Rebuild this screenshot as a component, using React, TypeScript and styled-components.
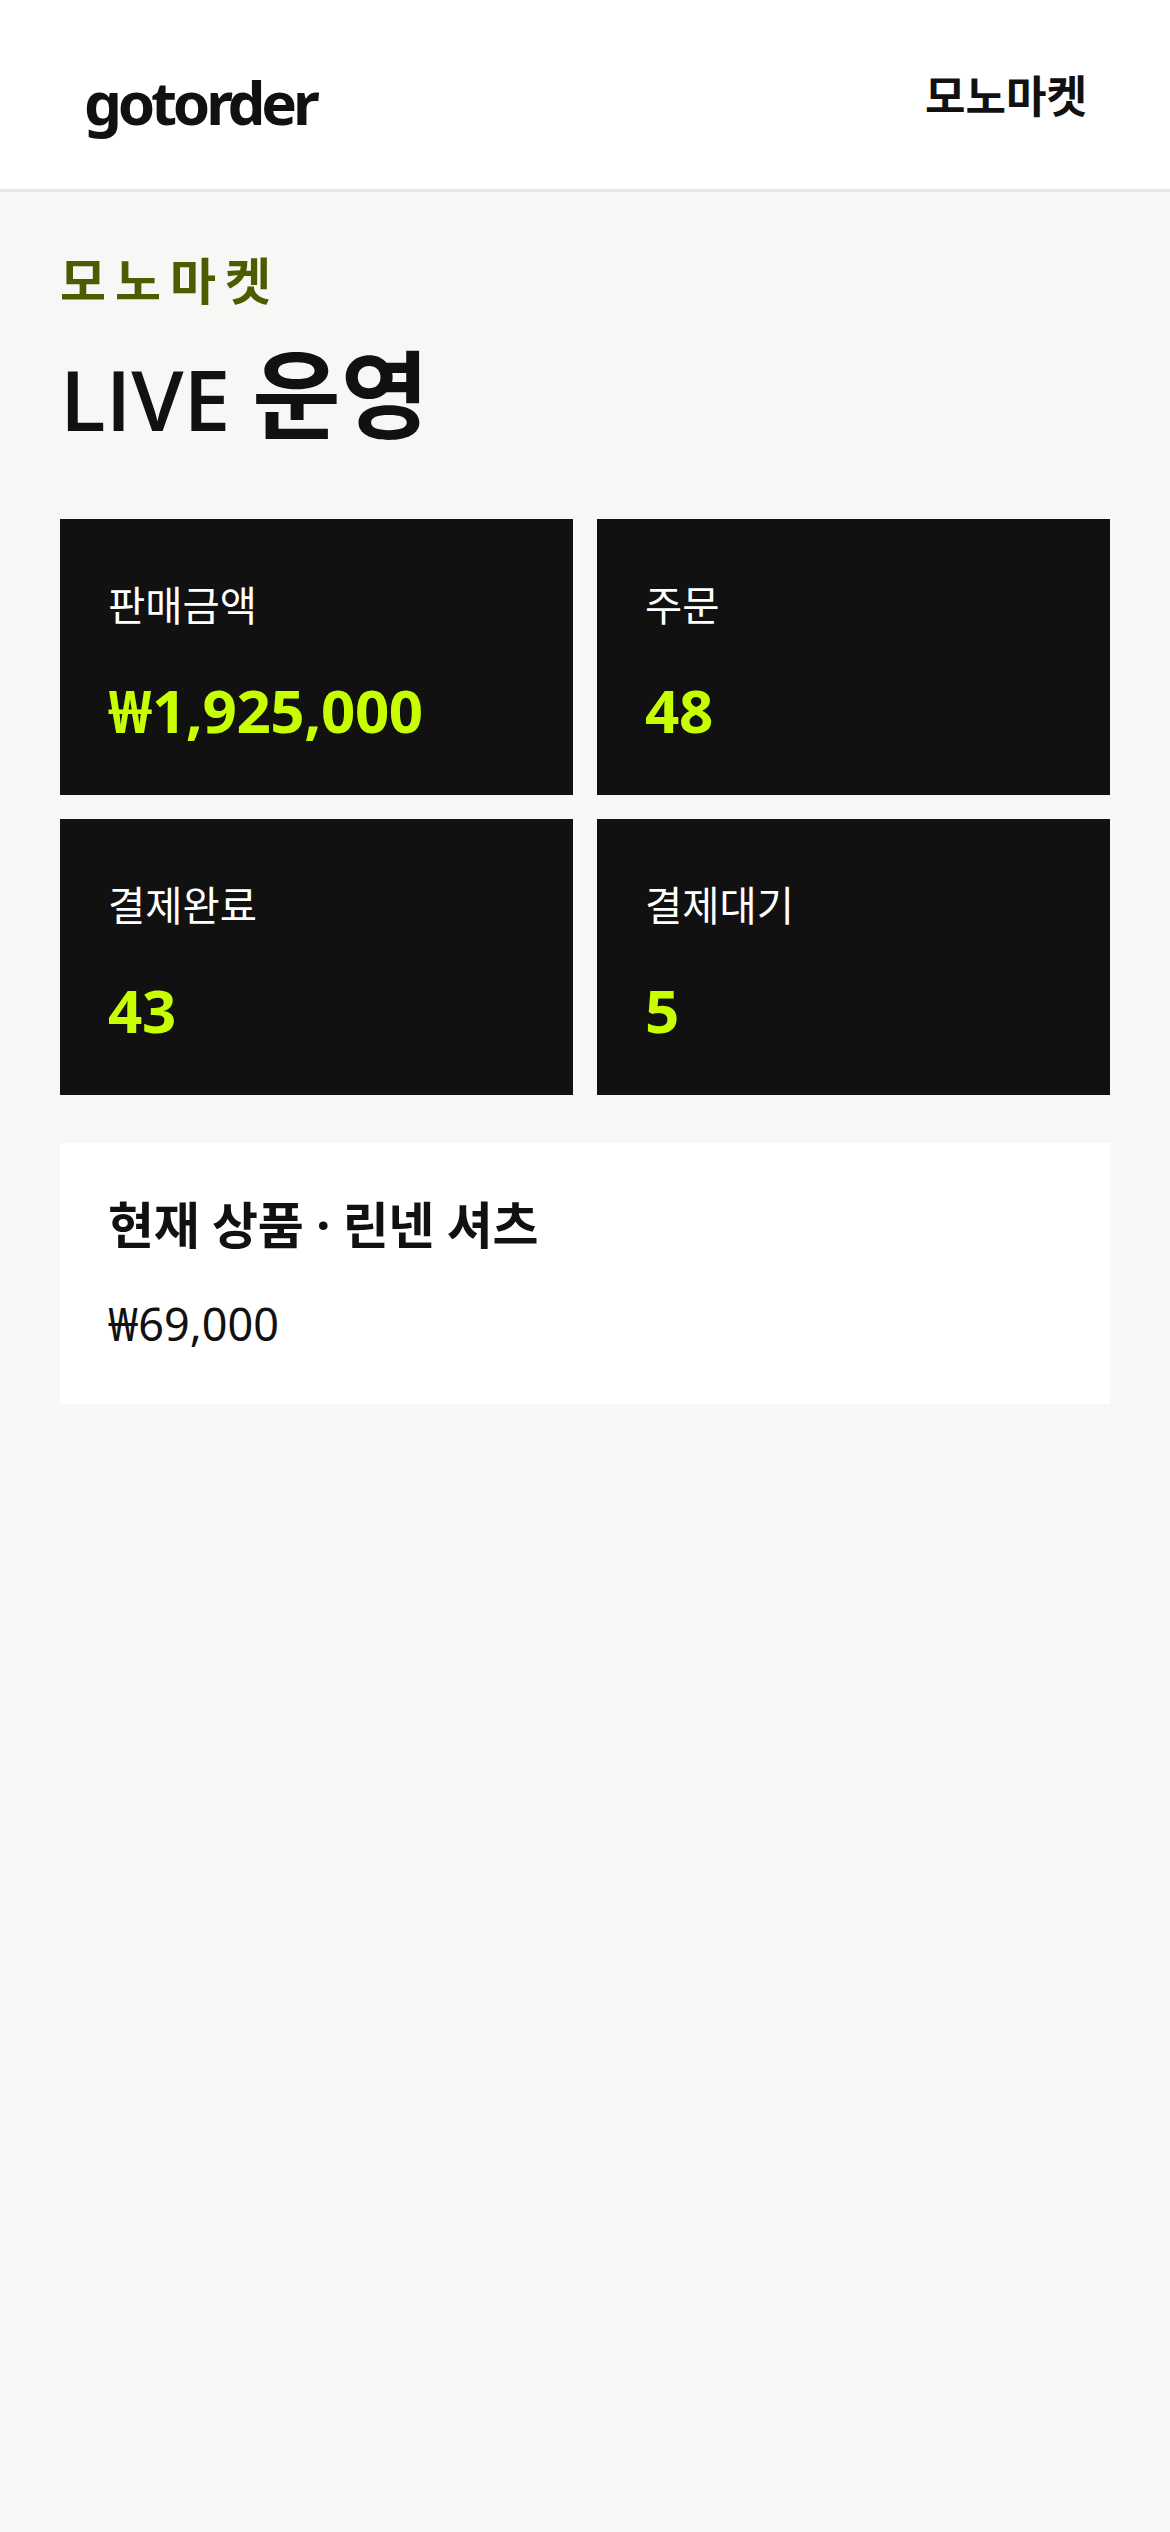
import styled, { createGlobalStyle } from "styled-components";

const GlobalStyle = createGlobalStyle`
  html, body {
    margin: 0;
    padding: 0;
    background: #f7f7f5;
  }
  * {
    box-sizing: border-box;
  }
  body {
    font-family: "Noto Sans CJK KR", sans-serif;
    color: #111;
  }
`;

const Page = styled.div`
  min-height: 2532px;
  background: #f7f7f5;
`;

const Header = styled.header`
  height: 192px;
  padding: 66px 83px 0 84px;
  display: flex;
  justify-content: space-between;
  align-items: flex-start;
  background: #fff;
  border-bottom: 3px solid #e5e5e2;
`;

const Brand = styled.div`
  font-family: "Noto Sans", sans-serif;
  font-size: 60px;
  line-height: 72px;
  font-weight: 700;
  letter-spacing: -4.2px;
`;

const ShopName = styled.div`
  font-size: 44px;
  line-height: 56px;
  font-weight: 700;
`;

const Main = styled.main`
  padding: 54px 60px 0;
`;

const Eyebrow = styled.div`
  font-size: 50px;
  line-height: 64px;
  font-weight: 700;
  letter-spacing: 9px;
  color: #4d5c00;
`;

const Title = styled.h1`
  margin: 24px 0 0;
  height: 112px;
  font-size: 96px;
  line-height: 112px;
  font-weight: 600;
`;

const TitleLatin = styled.span`
  font-family: "Open Sans", sans-serif;
  font-size: 84px;
`;

const StatsGrid = styled.section`
  margin-top: 73px;
  display: grid;
  grid-template-columns: 1fr 1fr;
  gap: 24px;
`;

const StatCard = styled.div`
  height: 276px;
  padding: 59px 48px 0;
  background: #111;
`;

const StatLabel = styled.div`
  font-size: 40.5px;
  line-height: 52px;
  color: #fff;
`;

const StatValue = styled.div`
  margin-top: 40px;
  font-family: "Noto Sans", "Noto Sans CJK KR", sans-serif;
  font-size: 60px;
  line-height: 80px;
  font-weight: 700;
  letter-spacing: -0.4px;
  color: #c8ff00;
`;

const ProductPanel = styled.section`
  margin-top: 48px;
  height: 261px;
  padding: 50px 48px 0;
  background: #fff;
`;

const ProductName = styled.div`
  font-family: "Noto Sans", "Noto Sans CJK KR", sans-serif;
  font-size: 50px;
  line-height: 64px;
  font-weight: 700;
  letter-spacing: -0.3px;
`;

const ProductPrice = styled.div`
  margin-top: 39px;
  font-family: "Noto Sans", "Noto Sans CJK KR", sans-serif;
  font-size: 45px;
  line-height: 56px;
`;

const stats = [
  { label: "판매금액", value: "₩1,925,000" },
  { label: "주문", value: "48" },
  { label: "결제완료", value: "43" },
  { label: "결제대기", value: "5" },
];

export default function App() {
  return (
    <Page>
      <GlobalStyle />
      <Header>
        <Brand>gotorder</Brand>
        <ShopName>모노마켓</ShopName>
      </Header>
      <Main>
        <Eyebrow>모노마켓</Eyebrow>
        <Title>
          <TitleLatin>LIVE</TitleLatin> 운영
        </Title>
        <StatsGrid>
          {stats.map((stat) => (
            <StatCard key={stat.label}>
              <StatLabel>{stat.label}</StatLabel>
              <StatValue>{stat.value}</StatValue>
            </StatCard>
          ))}
        </StatsGrid>
        <ProductPanel>
          <ProductName>현재 상품 · 린넨 셔츠</ProductName>
          <ProductPrice>₩69,000</ProductPrice>
        </ProductPanel>
      </Main>
    </Page>
  );
}
